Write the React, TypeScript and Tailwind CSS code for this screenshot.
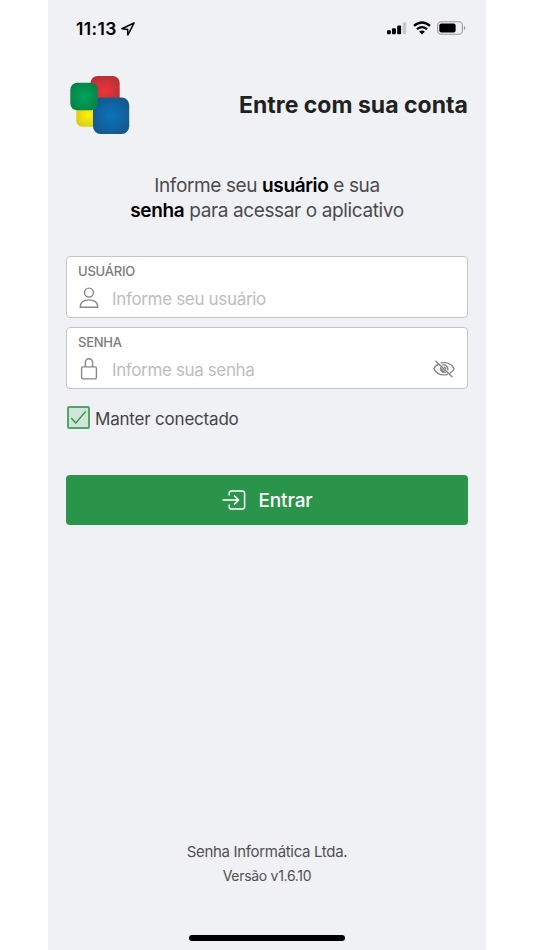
import React from "react";

function Logo() {
  return (
    <svg width="60" height="60" viewBox="0 0 60 60" className="block shrink-0">
      <defs>
        <radialGradient id="red" cx="50%" cy="50%" r="65%"><stop offset="0" stopColor="#ee3439" /><stop offset="1" stopColor="#ad3036" /></radialGradient>
        <radialGradient id="green" cx="50%" cy="50%" r="65%"><stop offset="0" stopColor="#00a65a" /><stop offset="1" stopColor="#087d45" /></radialGradient>
        <radialGradient id="blue" cx="50%" cy="50%" r="65%"><stop offset="0" stopColor="#0875bd" /><stop offset="1" stopColor="#175488" /></radialGradient>
        <radialGradient id="yellow" cx="50%" cy="50%" r="65%"><stop offset="0" stopColor="#fff20a" /><stop offset="1" stopColor="#d3c51d" /></radialGradient>
      </defs>
      <rect x="6.2" y="27" width="25" height="23.8" rx="6" fill="url(#yellow)" />
      <rect x="20.5" y="0" width="29.2" height="29.5" rx="7" fill="url(#red)" />
      <rect x="23" y="21.5" width="36.2" height="36.4" rx="7.5" fill="url(#blue)" />
      <rect x="0.3" y="6.8" width="27.4" height="27.4" rx="7" fill="url(#green)" />
    </svg>
  );
}

function StatusBar() {
  return (
    <div className="flex h-[56px] shrink-0 items-center pl-[28px] pr-[20px] text-black">
      <span className="mt-[2px] text-[17.5px] font-semibold tracking-[0.35px]">11:13</span>
      <svg width="14" height="14" viewBox="0 0 14 14" className="ml-[4px] mt-px" fill="none" stroke="#000" strokeWidth="1.6" strokeLinejoin="round">
        <path d="M13 1 .9 6.7l5.7.7.3 5.6Z" />
      </svg>
      <div className="ml-auto flex items-center">
        <svg width="20" height="14" viewBox="0 0 20 14">
          <rect x="0" y="9.3" width="3.9" height="4" rx="1" />
          <rect x="5" y="7.3" width="3.9" height="6" rx="1" />
          <rect x="10.2" y="4.5" width="3.9" height="8.8" rx="1" />
          <rect x="15.6" y="1.5" width="3.7" height="11.8" rx="1" fill="#c8c9cc" />
        </svg>
        <svg width="18" height="14" viewBox="0 0 18 14" className="ml-[6px]" fill="none" stroke="#000" strokeWidth="2.3">
          <path d="M1 4.9Q9-2 17 4.9M4 8.2q5-4.2 10 0" />
          <path d="M9 13.4 6.1 10.6q2.9-2.1 5.8 0Z" fill="#000" stroke="none" />
        </svg>
        <svg width="29" height="14" viewBox="0 0 29 14" className="ml-[6px]">
          <rect x=".6" y=".7" width="24.8" height="12.6" rx="3.8" fill="none" stroke="#98999c" strokeWidth="1.1" />
          <rect x="2.3" y="2.4" width="16.3" height="9.2" rx="2" />
          <path d="M27 5v4q1.4-.7 1.4-2T27 5" fill="#98999c" />
        </svg>
      </div>
    </div>
  );
}

function UserIcon() {
  return (
    <svg width="20" height="22" viewBox="0 0 20 22" fill="none" stroke="#888" strokeWidth="1.4" strokeLinejoin="round">
      <circle cx="10" cy="5.6" r="4.5" />
      <path d="M1.2 20.2c0-4.3 2.8-7.3 8.8-7.3s8.8 3 8.8 7.3Z" />
    </svg>
  );
}

function LockIcon() {
  return (
    <svg width="20" height="22" viewBox="0 0 20 22" fill="none" stroke="#888" strokeWidth="1.4">
      <rect x="2.6" y="8.9" width="14.8" height="12" rx="1.4" />
      <path d="M6.4 8.9V4.3a3.6 3.6 0 0 1 7.2 0v4.6" />
    </svg>
  );
}

function HiddenIcon() {
  return (
    <svg width="22" height="18" viewBox="0 0 22 18" fill="none" stroke="#858585" strokeWidth="1.4" strokeLinecap="round">
      <path d="m3 1.2 16 15.6" />
      <path d="M5.2 4.2C3 5.6 1.5 7.4.9 8.7c1.5 3.2 5.3 6.2 10.1 6.2 1.3 0 2.5-.2 3.5-.6M8.2 2.9c.9-.2 1.8-.3 2.8-.3 4.8 0 8.6 3 10.1 6.2-.7 1.4-2 2.9-3.8 4.1" />
      <path d="M7.3 7.3A4.2 4.2 0 0 0 12.5 12.6Z" fill="#858585" strokeWidth=".8" />
      <path d="M10 5a4.2 4.2 0 0 1 4.9 4.8M11.6 7.2l1.3 1.2" />
    </svg>
  );
}

function Field({ label, placeholder, icon, action, labelClass, textClass }: {
  label: string; placeholder: string; icon: React.ReactNode; action?: React.ReactNode; labelClass: string; textClass: string;
}) {
  return (
    <div className="flex h-[62px] flex-col rounded-[4px] border border-[#c4c4c5] bg-white px-[12px] pt-[6px]">
      <span className={"-ml-px h-[16px] self-start whitespace-nowrap text-[13px] font-medium leading-[17px] text-[#7b7b7b] " + labelClass}>{label}</span>
      <div className="mt-[7px] flex h-[24px] items-center">
        {icon}
        <span className={"ml-[13px] mt-px whitespace-nowrap text-[17px] leading-[24px] text-[#bdbdbd] " + textClass}>{placeholder}</span>
        {action && <span className="ml-auto">{action}</span>}
      </div>
    </div>
  );
}

export default function App() {
  return (
    <div className="flex h-[950px] w-[534px] justify-center bg-white font-['Inter','Liberation_Sans',sans-serif]">
      <main className="flex h-full w-[438px] flex-col bg-[#f0f1f5]">
        <StatusBar />
        <header className="mt-[20px] flex h-[60px] items-center justify-between pl-[22px] pr-[18px]">
          <Logo />
          <h1 className="-mt-[2px] whitespace-nowrap text-[23px] font-bold leading-[30px] tracking-[0.02px] text-[#202221]">Entre com sua conta</h1>
        </header>
        <div className="mt-[37px] flex flex-col items-center whitespace-nowrap text-[19px] leading-[25px] text-[#4b4b4b]">
          <p className="tracking-[-0.38px]">Informe seu <b className="font-semibold text-black">usuário</b> e sua</p>
          <p className="tracking-[-0.38px]"><b className="font-semibold text-black">senha</b> para acessar o aplicativo</p>
        </div>
        <form className="mt-[33px] flex flex-col px-[18px]">
          <Field label="USUÁRIO" placeholder="Informe seu usuário" icon={<UserIcon />} labelClass="tracking-[-0.2px]" textClass="tracking-[-0.33px]" />
          <div className="h-[9px]" />
          <Field label="SENHA" placeholder="Informe sua senha" icon={<LockIcon />} action={<HiddenIcon />} labelClass="tracking-[-0.25px]" textClass="tracking-[-0.37px]" />
          <label className="mt-[17px] flex h-[24px] items-start">
            <span className="ml-px flex size-[23px] items-center justify-center rounded-[2px] border-2 border-[#4fa66a] bg-[#d0e5d8]">
              <svg width="17" height="15" viewBox="0 0 17 15" fill="none" stroke="#2a954b" strokeWidth="1.4"><path d="m1.2 8 4.6 4.9L15.7 1.4" /></svg>
            </span>
            <span className="ml-[5px] mt-[2px] whitespace-nowrap text-[17px] leading-[23px] tracking-[-0.2px] text-[#444]">Manter conectado</span>
          </label>
          <button type="button" className="mt-[45px] flex h-[50px] items-center justify-center rounded-[4px] bg-[#2a944b] text-white">
            <svg width="24" height="20" viewBox="0 0 24 20" className="ml-px" fill="none" stroke="#fff" strokeWidth="1.5" strokeLinecap="round" strokeLinejoin="round">
              <path d="M7.2 5V3.3a2.4 2.4 0 0 1 2.4-2.4h10.6a2.4 2.4 0 0 1 2.4 2.4v13.4a2.4 2.4 0 0 1-2.4 2.4H9.6a2.4 2.4 0 0 1-2.4-2.4V15M1 10h15.5M12.6 5.9l4 4.1-4 4.1" />
            </svg>
            <span className="ml-[12px] mt-[2px] text-[19px] font-medium tracking-[-0.1px]">Entrar</span>
          </button>
        </form>
        <footer className="mt-auto flex flex-col items-center pb-[9px] text-[#505050]">
          <p className="whitespace-nowrap text-[15px] leading-[24px] tracking-[-0.32px]">Senha Informática Ltda.</p>
          <p className="whitespace-nowrap text-[14px] leading-[24px] tracking-[-0.3px]">Versão v1.6.10</p>
          <div className="mt-[47px] h-[6px] w-[156px] rounded-full bg-black" />
        </footer>
      </main>
    </div>
  );
}
